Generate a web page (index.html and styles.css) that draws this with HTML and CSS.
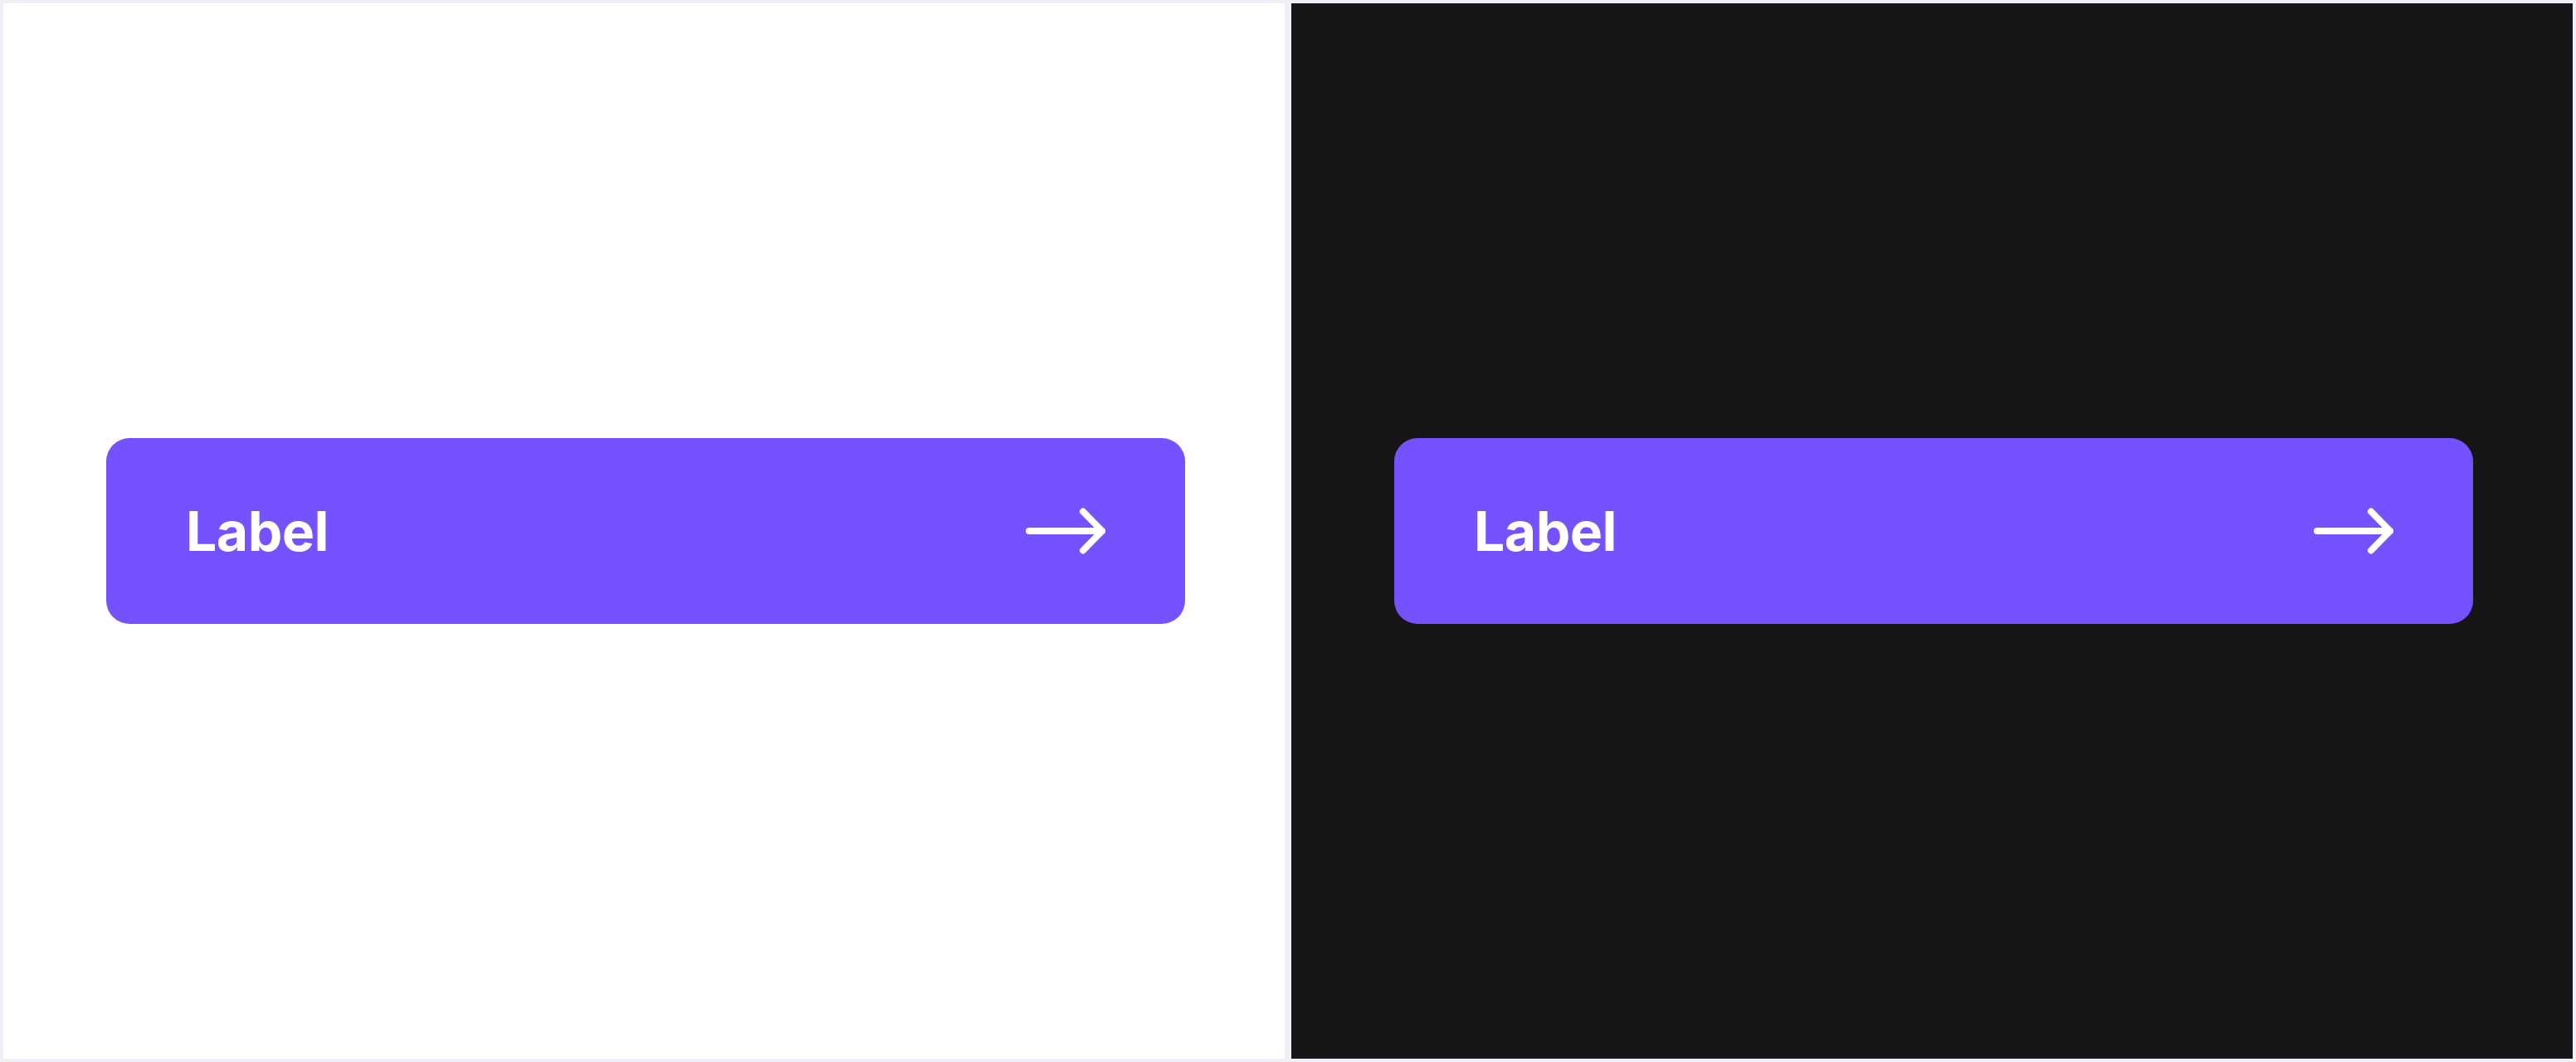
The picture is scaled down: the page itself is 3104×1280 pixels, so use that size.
FILE: index.html
```html
<!DOCTYPE html>
<html lang="en">
<head>
<meta charset="utf-8">
<title>Button</title>
<link rel="stylesheet" href="styles.css">
</head>
<body>
<main class="stage">
  <section class="panel panel-light">
    <button class="cta" type="button">
      <span class="cta-label">Label</span>
      <svg class="cta-icon" width="96" height="56" viewBox="0 0 96 56" aria-hidden="true">
        <path d="M4 28H92M69 4.5L92 28L69 51.5" fill="none" stroke="#ffffff" stroke-width="8" stroke-linecap="round" stroke-linejoin="round"/>
      </svg>
    </button>
  </section>
  <section class="panel panel-dark">
    <button class="cta" type="button">
      <span class="cta-label">Label</span>
      <svg class="cta-icon" width="96" height="56" viewBox="0 0 96 56" aria-hidden="true">
        <path d="M4 28H92M69 4.5L92 28L69 51.5" fill="none" stroke="#ffffff" stroke-width="8" stroke-linecap="round" stroke-linejoin="round"/>
      </svg>
    </button>
  </section>
</main>
</body>
</html>
```
FILE: styles.css
```css
html, body {
  margin: 0;
  padding: 0;
  background: #efeff7;
}

.stage {
  box-sizing: border-box;
  width: 3104px;
  height: 1280px;
  padding: 4px;
  display: grid;
  grid-template-columns: 1fr 1fr;
  gap: 8px;
}

.panel {
  display: flex;
  align-items: center;
  padding: 0 120px 0 124px;
}

.panel-light { background: #ffffff; }
.panel-dark { background: #161616; }

.cta {
  flex: 1;
  height: 224px;
  margin: 0;
  border: 0;
  border-radius: 28px;
  background: #7452ff;
  color: #ffffff;
  display: flex;
  align-items: center;
  justify-content: space-between;
  padding: 0 96px;
  font-family: "Inter", "Liberation Sans", sans-serif;
  cursor: pointer;
}

.cta-label {
  font-size: 66px;
  font-weight: 700;
  line-height: 1;
  letter-spacing: -0.5px;
}

.cta-icon {
  display: block;
  flex: none;
}
```
